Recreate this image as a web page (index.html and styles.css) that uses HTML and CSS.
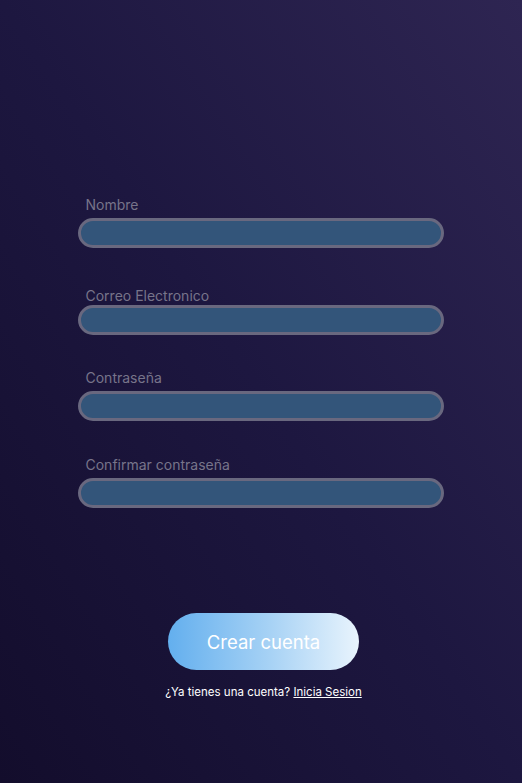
FILE: index.html
```html
<!DOCTYPE html>
<html lang="es">
<head>
<meta charset="utf-8">
<title>Crear cuenta</title>
<link rel="stylesheet" href="styles.css">
</head>
<body>
<main class="page">
  <form class="form">
    <div class="field">
      <label class="label" for="nombre">Nombre</label>
      <input class="input" id="nombre" type="text">
    </div>
    <div class="field field-tight">
      <label class="label" for="correo">Correo Electronico</label>
      <input class="input" id="correo" type="email">
    </div>
    <div class="field field-short">
      <label class="label" for="pass">Contraseña</label>
      <input class="input" id="pass" type="password">
    </div>
    <div class="field">
      <label class="label" for="pass2">Confirmar contraseña</label>
      <input class="input" id="pass2" type="password">
    </div>
    <button class="button" type="button">Crear cuenta</button>
    <p class="footer">¿Ya tienes una cuenta? <a class="link" href="#">Inicia Sesion</a></p>
  </form>
</main>
</body>
</html>
```
FILE: styles.css
```css
* { box-sizing: border-box; }
html, body { margin: 0; padding: 0; }
body {
  width: 522px;
  height: 783px;
  overflow: hidden;
  font-family: Inter, "Noto Sans", sans-serif;
  background: linear-gradient(to top right, #130d2c 0%, #1d1740 50%, #2e2552 100%);
}
.page {
  height: 100%;
  padding-top: 161px;
  display: flex;
  justify-content: center;
}
.form {
  width: 366px;
  margin-left: -1px;
  display: flex;
  flex-direction: column;
  align-items: stretch;
}
.field {
  height: 87px;
  display: flex;
  flex-direction: column;
  justify-content: flex-end;
}
.field-short { height: 86px; }
.label {
  font-size: 14px;
  line-height: 17px;
  color: #77748a;
  padding-left: 8px;
  margin-bottom: 5px;
}
.field-tight .label { margin-bottom: 1px; }
.input {
  height: 30px;
  width: 100%;
  border: 3px solid #69687f;
  border-radius: 15px;
  background: #33557a;
  outline: none;
  padding: 0 12px;
  color: #fff;
}
.button {
  align-self: center;
  margin-top: 105px;
  margin-left: 6px;
  width: 191px;
  height: 57px;
  border: none;
  border-radius: 29px;
  background: linear-gradient(90deg, #63afee 0%, #a9d3f5 55%, #e9f4fd 100%);
  color: #ffffff;
  font-family: Inter, "Noto Sans", sans-serif;
  font-size: 18.5px;
  font-weight: 400;
  cursor: pointer;
}
.footer {
  margin: 15px 0 0 6px;
  text-align: center;
  font-size: 11.5px;
  line-height: 15px;
  color: #ffffff;
}
.link {
  color: #ffffff;
  text-decoration: underline;
}
```
